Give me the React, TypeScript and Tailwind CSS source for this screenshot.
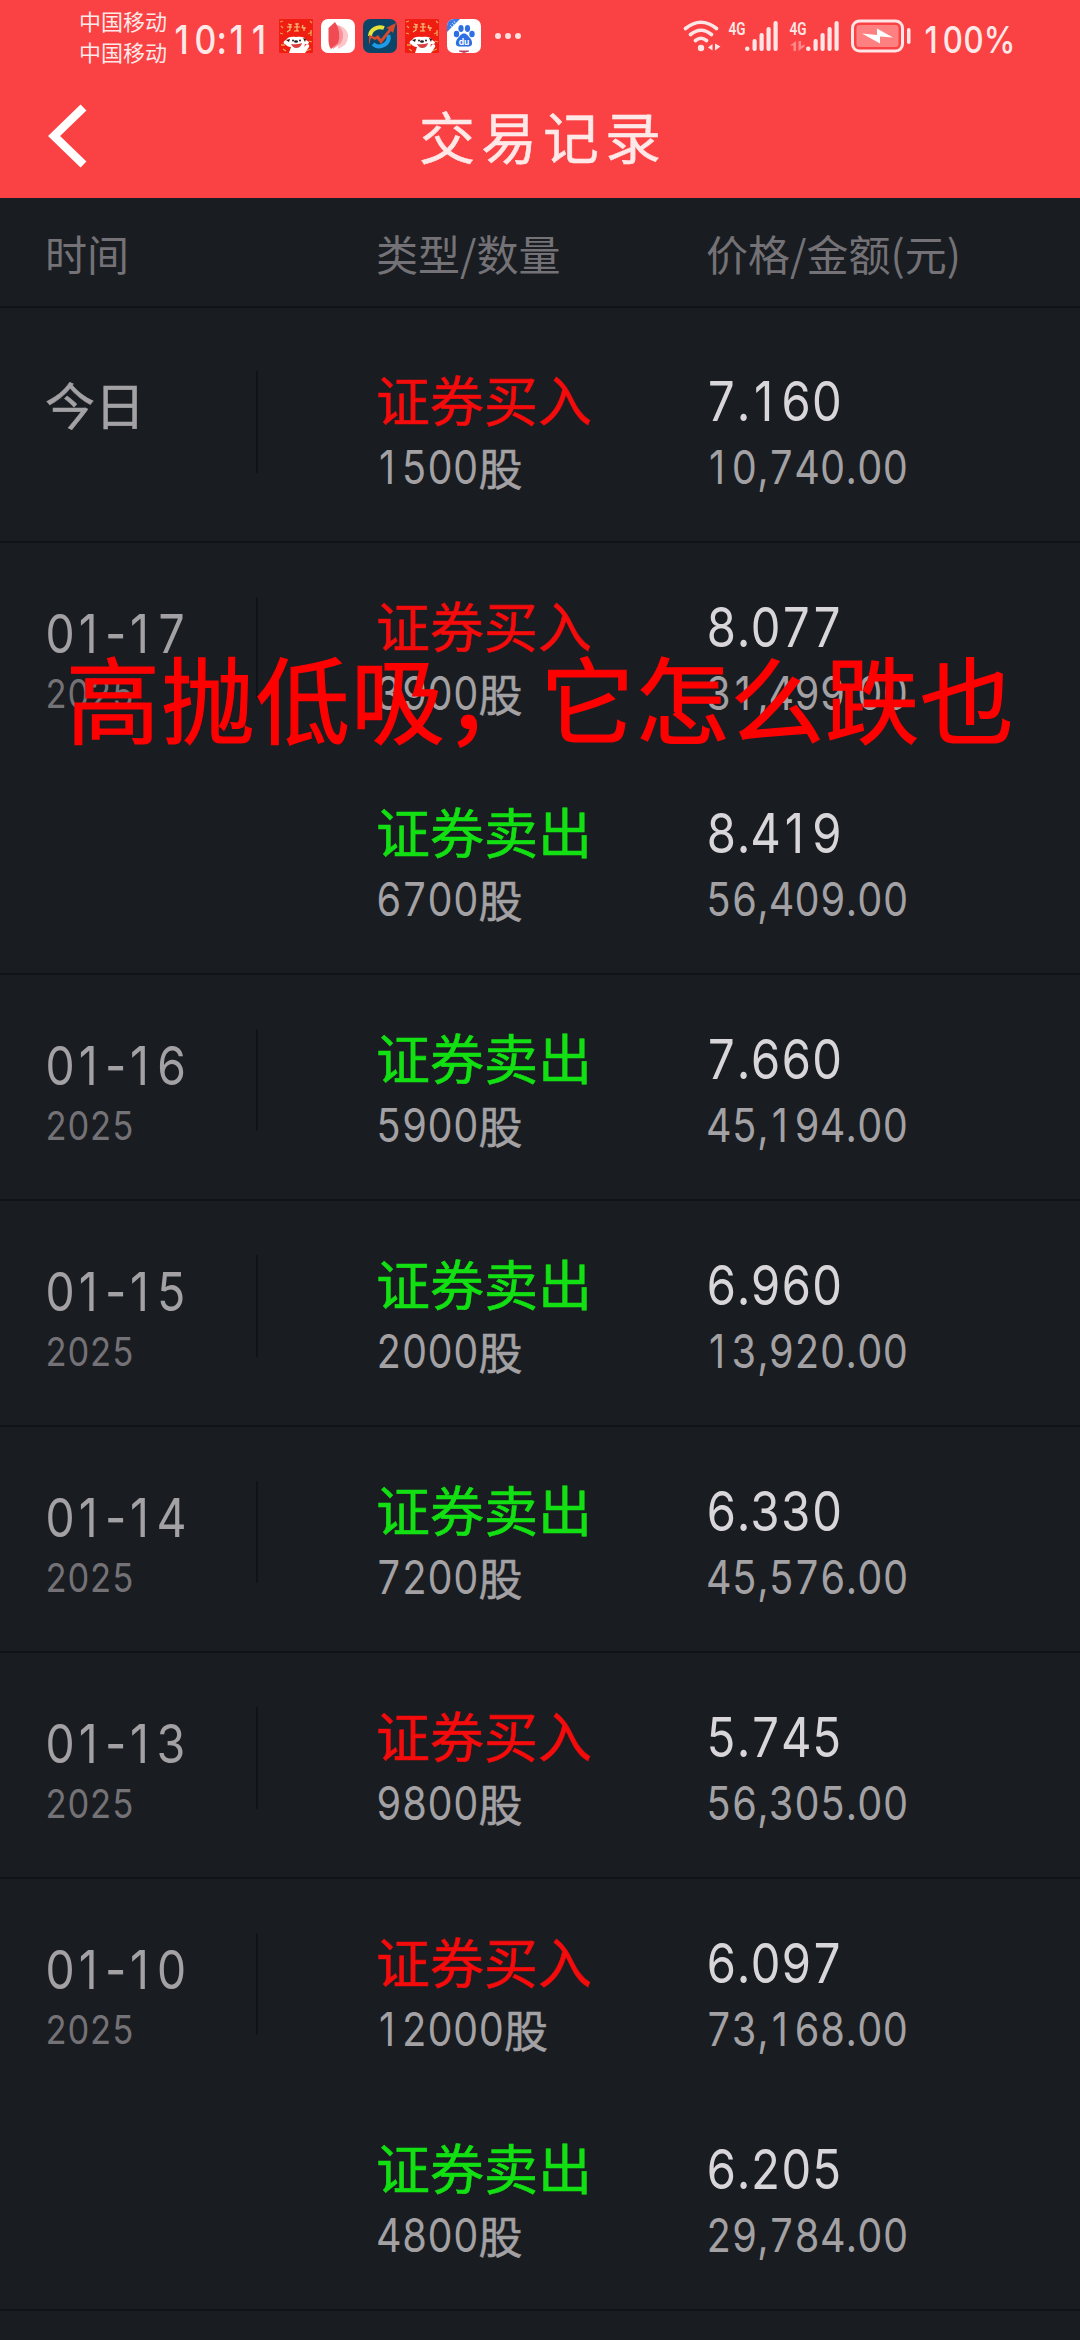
interface Trade {
  side: 'buy' | 'sell';
  shares: number;
  price: string;
  amount: string;
}

interface TradeDay {
  date: string;
  year?: string;
  trades: Trade[];
}

const days: TradeDay[] = [
  {
    date: '今日',
    trades: [{ side: 'buy', shares: 1500, price: '7.160', amount: '10,740.00' }],
  },
  {
    date: '01-17',
    year: '2025',
    trades: [
      { side: 'buy', shares: 3900, price: '8.077', amount: '31,499.00' },
      { side: 'sell', shares: 6700, price: '8.419', amount: '56,409.00' },
    ],
  },
  {
    date: '01-16',
    year: '2025',
    trades: [{ side: 'sell', shares: 5900, price: '7.660', amount: '45,194.00' }],
  },
  {
    date: '01-15',
    year: '2025',
    trades: [{ side: 'sell', shares: 2000, price: '6.960', amount: '13,920.00' }],
  },
  {
    date: '01-14',
    year: '2025',
    trades: [{ side: 'sell', shares: 7200, price: '6.330', amount: '45,576.00' }],
  },
  {
    date: '01-13',
    year: '2025',
    trades: [{ side: 'buy', shares: 9800, price: '5.745', amount: '56,305.00' }],
  },
  {
    date: '01-10',
    year: '2025',
    trades: [
      { side: 'buy', shares: 12000, price: '6.097', amount: '73,168.00' },
      { side: 'sell', shares: 4800, price: '6.205', amount: '29,784.00' },
    ],
  },
];

// Digits share one width, separators keep their natural one.
// The tabular "1" has a foot, so the plain one sits in a cell of the same width.
function Num({ value }: { value: string }) {
  return (
    <span
      className="inline-block origin-left scale-x-[0.86] whitespace-nowrap font-['Inter'] tabular-nums"
      style={{ marginRight: `${-0.14 * 0.65 * value.length}em` }}
    >
      {value.split(/([.,:%1-])/).map((part, i) => {
        if (part === '1') {
          return <span key={i} className="inline-block w-[0.645em] pr-[0.08em] text-center normal-nums">1</span>;
        }
        return /[.,:%-]/.test(part) ? <span key={i} className="normal-nums">{part}</span> : part;
      })}
    </span>
  );
}

function DogIcon() {
  return (
    <svg viewBox="0 0 34 34" className="h-[34px] w-[34px]">
      <rect width="34" height="34" rx="1" fill="#f01d12" />
      <path d="M1 3l3-1M2 7l2 2M1 14l3 1M31 2l2 2M29 15l4-2M32 11v6M2 26h4M4 30l3 2M30 22l3 1M27 32l5-2" stroke="#e9a24a" strokeWidth="1.3" />
      <path d="M9 5l4 1M8 8h5M11 5v6l-3 2M16 5h4M15 8h6M18 4v8M15 12h5M24 6l-1 3M23 9h4M25 8v4" stroke="#f3c777" strokeWidth="1.200" fill="none" />
      <path d="M7 21c1-3 6-4 10-3 5-1 9 0 10 3l3 2c0 2-2 3-4 2l-2 9H10l2-6c-3 0-5-2-6-3-2 0-2-3 1-4z" fill="#fff" />
      <path d="M23 30l4-4c2-2 4 0 3 2l-4 6h-4z" fill="#fff" />
      <path d="M7 21l4-1-1 3zM24 19l3 1-1 3z" fill="#2a1512" />
      <circle cx="14" cy="21.500" r="1" fill="#222" />
      <circle cx="21" cy="21.500" r="1" fill="#222" />
      <ellipse cx="17" cy="22.500" rx="2" ry="1.300" fill="#222" />
      <path d="M12 25q6 1 11-1-1 5-6 5-3 0-5-4z" fill="#d9403f" />
    </svg>
  );
}

function PagesIcon() {
  return (
    <svg viewBox="0 0 34 34" className="h-[34px] w-[34px]">
      <rect width="34" height="34" rx="7" fill="#fff" />
      <path d="M18 6l5 3q4 3 4 8t-3 9l-7 4z" fill="#fcc5c8" />
      <path d="M14 5l4 2q4 4 4 9 0 6-3 9l-7 5z" fill="#f8949a" />
      <path d="M7.500 9L14 3q3 4 4 10t-1 11l-7 6q-2-2-2.500-8z" fill="#f04a52" />
    </svg>
  );
}

function StockIcon() {
  return (
    <svg viewBox="0 0 34 34" className="h-[34px] w-[34px]">
      <rect width="34" height="34" rx="7" fill="#0d4568" />
      <path d="M7 17a10 9 0 0 1 14-8" stroke="#e6e23a" strokeWidth="4" fill="none" />
      <path d="M25.500 16a9.500 9.500 0 0 1-15.500 9" stroke="#1d9be6" strokeWidth="4" fill="none" />
      <path d="M6 16l6 2 3-2 3 4 8-10-3-1 10-5-3 10-2-2-10 13-4-5-2 1-4-2-2 7z" fill="#d8492b" />
    </svg>
  );
}

function BaiduIcon() {
  return (
    <svg viewBox="0 0 34 34" className="h-[34px] w-[34px]">
      <defs>
        <clipPath id="baidu-clip">
          <rect width="34" height="34" rx="7" />
        </clipPath>
      </defs>
      <g clipPath="url(#baidu-clip)">
        <rect width="34" height="34" fill="#fff" />
        <path d="M0 0h13L0 13z" fill="#3b7be6" />
        <path d="M3 6l2 2M5 4l2 2M7 2l1 2" stroke="#bcd3fa" strokeWidth="1" />
        <g fill="#2f6fe4">
          <ellipse cx="9.500" cy="15" rx="2.700" ry="3.200" />
          <ellipse cx="14" cy="9.500" rx="2.600" ry="3.400" />
          <ellipse cx="20.500" cy="9.500" rx="2.600" ry="3.400" />
          <ellipse cx="25" cy="15" rx="2.700" ry="3.200" />
          <path d="M17 14.500c3 0 4 2.500 6 4.500s4 8-1 8.500H12c-5-.5-3-6.500-1-8.500s3-4.500 6-4.500z" />
        </g>
        <text x="17" y="25.500" textAnchor="middle" fontSize="8.500" fontWeight="700" fill="#fff" fontFamily="Inter">du</text>
        <path d="M12 31.500h10v1l-5 1.500-5-1.500z" fill="#c0405f" />
      </g>
    </svg>
  );
}

function WifiIcon() {
  return (
    <svg viewBox="0 0 39 32" className="h-8 w-[39px]" fill="none" stroke="#ffe6e6" strokeWidth="3.600" strokeLinecap="round">
      <path d="M2.500 8.500q15.500-12.500 31 0M7.500 14.500q10.500-8.500 21 0M12.500 20.500q5.500-4.500 11 0" />
      <circle cx="18" cy="28" r="3.200" fill="#ffe6e6" stroke="none" />
      <path d="M25 27.500l4.500-3.500v6.500zM32 23.500v7l5.500-4z" fill="#ffe6e6" stroke="none" />
    </svg>
  );
}

function SignalIcon({ idle }: { idle?: boolean }) {
  return (
    <svg viewBox="0 0 51 32" className="h-8 w-[51px] overflow-visible" fill="#ffe6e6">
      <text x="0.500" y="14.500" fontSize="19" fontWeight="600" fontFamily="Roboto" textLength="17" lengthAdjust="spacingAndGlyphs">4G</text>
      <rect x="17" y="26.500" width="4.500" height="4.500" rx="2.200" />
      <rect x="24.500" y="19" width="4.200" height="12" rx="2" />
      <rect x="31.500" y="13" width="4.200" height="18" rx="2" />
      <rect x="38.500" y="7" width="4.200" height="24" rx="2" />
      <rect x="45.500" y="1" width="4.200" height="30" rx="2" />
      {idle && <path d="M1 25.500l6-4.500v10H4.500v-5.500zM9.500 21v10l6-4.500v-2L12 26v-5z" fill="#ff8a8a" />}
    </svg>
  );
}

function BatteryIcon() {
  return (
    <svg viewBox="0 0 60 34" className="h-[34px] w-[60px]">
      <rect x="1.500" y="2" width="50" height="30" rx="7" fill="none" stroke="#ffe6e6" strokeWidth="3" />
      <rect x="5.500" y="6" width="42" height="22" rx="3" fill="#ff8080" />
      <path d="M11 14.500l15 1.500V9.500l16 9-13-1v7z" fill="#fff" />
      <rect x="56" y="9" width="3.500" height="16" rx="1.700" fill="#ffe6e6" />
    </svg>
  );
}

function StatusBar() {
  return (
    <div className="flex h-[75px] items-start text-[#ffe8e8]">
      <div className="ml-[79px] mt-[5px] w-[89px] text-[22px] leading-[31px]">
        <div>中国移动</div>
        <div>中国移动</div>
      </div>
      <div className="ml-1 mt-[17px] w-[107px] whitespace-nowrap text-[40px] font-medium leading-10">
        <Num value="10:11" />
      </div>
      <div className="mt-[19px] flex gap-2">
        <DogIcon />
        <PagesIcon />
        <StockIcon />
        <DogIcon />
        <BaiduIcon />
      </div>
      <div className="ml-[14px] mt-[33px] flex gap-1">
        <i className="h-1.5 w-1.5 rounded-full bg-[#ffe0e0]" />
        <i className="h-1.5 w-1.5 rounded-full bg-[#ffe0e0]" />
        <i className="h-1.5 w-1.5 rounded-full bg-[#ffe0e0]" />
      </div>
      <div className="ml-auto mr-[70px] mt-5 flex items-start">
        <WifiIcon />
        <div className="ml-[6px]"><SignalIcon /></div>
        <div className="ml-[10px]"><SignalIcon idle /></div>
        <div className="-mt-[1px] ml-[11px]"><BatteryIcon /></div>
        <div className="-mt-[3px] ml-[11px] w-[88px] whitespace-nowrap text-[37px] font-medium leading-10">
          <Num value="100%" />
        </div>
      </div>
    </div>
  );
}

function TradeRow({ trade }: { trade: Trade }) {
  const buy = trade.side === 'buy';
  return (
    <div className="flex h-[206px]">
      <div className="w-[330px] pt-[43px]">
        <div className={`h-[60px] text-[54px] leading-[60px] [-webkit-text-stroke:0.6px] ${buy ? 'text-[#f40b0b]' : 'text-[#12e012]'}`}>
          {buy ? '证券买入' : '证券卖出'}
        </div>
        <div className="mt-[8px] flex h-[60px] text-[46px] leading-[60px] text-[#a3a1a4]">
          <Num value={String(trade.shares)} />
          <span className="text-[44px] [-webkit-text-stroke:0.5px]">股</span>
        </div>
      </div>
      <div className="pt-[45px]">
        <div className="flex h-[60px] text-[55px] leading-[60px] text-[#d9d6da]">
          <Num value={trade.price} />
        </div>
        <div className="mt-[6px] flex h-[60px] text-[46px] leading-[60px] text-[#a3a1a4]">
          <Num value={trade.amount} />
        </div>
      </div>
    </div>
  );
}

function DaySection({ day }: { day: TradeDay }) {
  return (
    <section className="flex border-b-2 border-[#101317] py-[9px] first:pt-[18px]">
      <div className="w-[256px] pl-[45px] pt-[52px]">
        {day.year ? (
          <>
            <div className="flex h-[60px] text-[54px] leading-[60px] text-[#a3a1a4]">
              <Num value={day.date} />
            </div>
            <div className="flex h-[60px] text-[40px] leading-[60px] text-[#747276]">
              <Num value={day.year} />
            </div>
          </>
        ) : (
          <div className="-mt-[5px] h-[60px] text-[50px] leading-[60px] text-[#a3a1a4] [-webkit-text-stroke:0.5px]">
            {day.date}
          </div>
        )}
      </div>
      <div className="mr-[118px] mt-[45px] h-[102px] w-[2px] bg-[#101317]" />
      <div>
        {day.trades.map((trade) => (
          <TradeRow key={trade.price} trade={trade} />
        ))}
      </div>
    </section>
  );
}

export default function App() {
  return (
    <div className="relative h-[2340px] w-[1080px] overflow-hidden bg-[#191d21] font-['Noto_Sans_CJK_SC',sans-serif]">
      <header className="h-[198px] bg-[#fa4143]">
        <StatusBar />
        <div className="grid h-[123px] grid-cols-[1fr_auto_1fr] items-center">
          <svg viewBox="0 0 40 64" className="mb-[2px] ml-[48px] h-16 w-10" fill="none" stroke="#fff" strokeWidth="8.500">
            <path d="M35.500 3.500L6 32l29.500 28.500" />
          </svg>
          <h1 className="-mt-1 pl-[6px] text-[56px] leading-[70px] tracking-[6px] text-[#ffe8e8] [-webkit-text-stroke:0.5px]">交易记录</h1>
        </div>
      </header>

      <div className="flex h-[110px] items-center border-b-2 border-[#101317] text-[42px] text-[#747276]">
        <span className="w-[376px] pl-[45px]">时间</span>
        <span className="w-[330px]">类型/数量</span>
        <span>价格/金额(元)</span>
      </div>

      <main>
        {days.map((day) => (
          <DaySection key={day.date} day={day} />
        ))}
      </main>

      <p className="absolute left-[66px] top-[636px] whitespace-nowrap text-[94px] leading-[120px] tracking-[0.9px] text-[#ff0000] [-webkit-text-stroke:1.2px]">
        高抛低吸，它怎么跌也
      </p>
    </div>
  );
}
